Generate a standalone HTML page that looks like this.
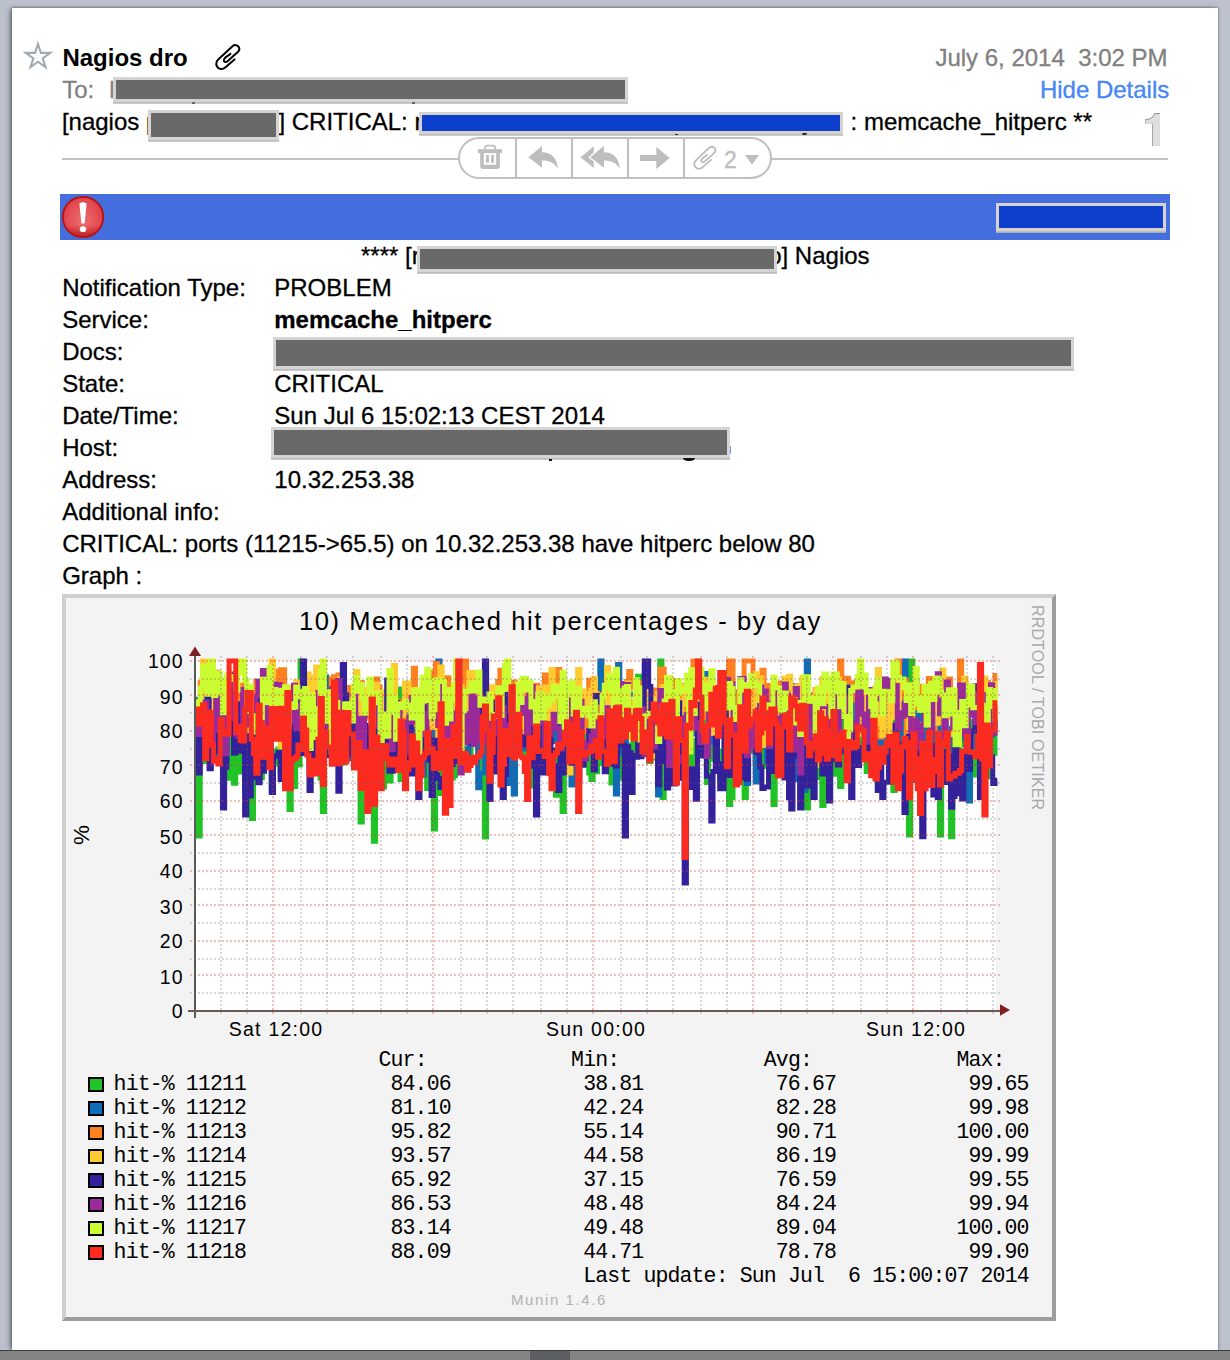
<!DOCTYPE html>
<html>
<head>
<meta charset="utf-8">
<title>Mail</title>
<style>
html,body{margin:0;padding:0;}html{width:1230px;height:1360px;overflow:hidden;}
body{width:1230px;height:1360px;overflow:hidden;position:relative;background:#bcc1cb;font-family:"Liberation Sans",sans-serif;}
#panel{position:absolute;left:12px;top:8px;width:1206px;height:1342px;background:#fff;box-shadow:-3px 0 5px -1px rgba(55,60,70,.55),0 0 2.5px rgba(55,60,70,.75);}
#bottom{position:absolute;left:0;top:1349.8px;width:1230px;height:11px;background:#848484;border-top:1.8px solid #393b3f;box-sizing:border-box;}
#bottom i{position:absolute;left:530px;top:0;width:40px;height:10px;background:#5d5f63;}
.t{position:absolute;white-space:pre;font-size:24px;line-height:32px;height:32px;color:#000;margin:1px 0 0 .6px;-webkit-text-stroke:.3px;}
.g{color:#808080;}
.b{font-weight:bold;}
.rd{position:absolute;box-sizing:border-box;border:3px solid #d4d4d4;background:#696969;box-shadow:0 1.8px 0 #bdbdbd;}
.rb{background:#0c40cc;border-color:#d6d3cf;}
#bar{position:absolute;left:60px;top:194px;width:1110px;height:46px;background:#446ddd;}
#hr{position:absolute;left:62px;top:158px;width:1106px;height:2px;background:#c1c1c1;}
#pill{position:absolute;left:458px;top:137px;width:314px;height:42px;box-sizing:border-box;border:2px solid #bfbfbf;border-radius:21px;background:#fff;}
#pill i{position:absolute;top:0;width:1.8px;height:38px;background:#bfbfbf;}
svg{position:absolute;left:0;top:0;overflow:visible;}
</style>
</head>
<body>
<div id="panel"></div>
<div id="bottom"><i></i></div>
<style>
#graph{position:absolute;left:62px;top:594px;width:994px;height:727px;box-sizing:border-box;background:#f3f3f3;border:4px solid #cfcfcf;border-right-color:#9d9d9d;border-bottom-color:#9d9d9d;}
.gl{position:absolute;white-space:pre;line-height:24px;height:24px;color:#000;}
.m{position:absolute;white-space:pre;font-family:"Liberation Mono",monospace;font-size:21.5px;letter-spacing:-0.86px;line-height:26px;height:26px;color:#000;}
.sw{position:absolute;left:88px;width:16px;height:15px;box-sizing:border-box;border:2px solid #000;}
</style><!-- header -->
<svg width="1230" height="200" viewBox="0 0 1230 200">
  <polygon id="star" fill="none" stroke="#a1a9b5" stroke-width="2.1" stroke-linejoin="miter" stroke-miterlimit="10" points="38.00,44.00 40.89,52.88 50.22,52.88 42.67,58.37 45.55,67.25 38.00,61.76 30.45,67.25 33.33,58.37 25.78,52.88 35.11,52.88"/>
  <path d="M234.5,59.4 L225.5,67.3 C222.5,70 218.5,69.5 217,66.5 C215.5,63.5 217,60.5 219,58.8 L232.5,46.2 C234.5,44.5 237.5,44.8 238.8,47 C240,49 239,51 237.2,52.5 L227.5,61.2 C226,62.5 224.5,62.2 223.9,61 C223.3,59.8 224,58.8 225,57.9 L230.4,53.9" fill="none" stroke="#000" stroke-width="2" stroke-linecap="round" stroke-linejoin="round"/>
</svg>
<div class="t b" style="left:61.8px;top:40.7px;-webkit-text-stroke:0;">Nagios dro</div>
<div class="t g" style="left:934.8px;top:40.7px;">July 6, 2014  3:02 PM</div>
<div class="t g" style="left:61.6px;top:72.6px;">To:</div>
<div class="t g" style="left:108.6px;top:72.6px;">l</div>
<div class="t" style="left:1039.3px;top:72.6px;color:#4386f4;">Hide Details</div>
<div class="rd" style="left:113.2px;top:77.1px;width:514.6px;height:25px;"></div>

<div class="t" style="left:61.3px;top:104.5px;">[nagios </div>
<div class="t" style="left:277.8px;top:104.5px;">] CRITICAL: r</div>
<div class="t" style="left:850px;top:104.5px;">: memcache_hitperc **</div>
<div style="position:absolute;left:146.8px;top:116.8px;width:1.6px;height:18px;background:#b8661a;"></div>
<div class="rd" style="left:148.1px;top:110.2px;width:131px;height:29.9px;"></div>
<div class="rd rb" style="left:419.1px;top:112.1px;width:424.2px;height:22px;"></div>
<svg width="1230" height="200" viewBox="0 0 1230 200"><path id="one" d="M1154.3,113 L1160,113 L1160,146 L1152,146 L1152,123.6 L1145,123.6 L1145,119.3 C1150,119 1153,117 1154.3,113 Z" fill="#979797"/><path d="M1154.9,114 L1160,114 L1160,146 L1152.8,146 L1152.8,123.6 L1145.6,123.6 L1145.6,120.2 C1150.5,119.8 1153.7,117.6 1154.9,114 Z" fill="#dedede"/></svg>

<div style="position:absolute;left:191.5px;top:102.4px;width:3px;height:1.2px;background:#666;"></div>
<div style="position:absolute;left:411.5px;top:102.3px;width:3.5px;height:1.4px;background:#666;"></div>
<div style="position:absolute;left:674.6px;top:134px;width:3.2px;height:1.2px;background:#222;"></div>
<div style="position:absolute;left:801.5px;top:133.4px;width:5.5px;height:1.4px;background:#222;border-radius:0 0 3px 3px;"></div>
<div id="hr"></div>
<div id="pill"><i style="left:55.3px"></i><i style="left:111.3px"></i><i style="left:167.3px"></i><i style="left:223.3px"></i></div>
<svg width="1230" height="200" viewBox="0 0 1230 200" fill="#bdbdbd">
  <!-- trash -->
  <path d="M484.9,149.5 L484.9,148.2 A2.6,2.6 0 0 1 487.5,145.6 L492.7,145.6 A2.6,2.6 0 0 1 495.3,148.2 L495.3,149.5" fill="none" stroke="#bdbdbd" stroke-width="1.8"/>
  <rect x="478" y="149.2" width="24" height="3.9"/>
  <path d="M480.2,153 L499.9,153 L499.9,166.6 A2.4,2.4 0 0 1 497.5,169 L482.6,169 A2.4,2.4 0 0 1 480.2,166.6 Z M483.8,153 L483.8,164.8 L496.2,164.8 L496.2,153 Z" fill-rule="evenodd"/>
  <rect x="486.1" y="155" width="2.8" height="7.8"/>
  <rect x="491.1" y="155" width="2.8" height="7.8"/>
  <!-- reply -->
  <path d="M528.4,157.3 L542,146.1 L542,152.3 C551,152.3 557.5,158 557.6,168.5 C555,163 549,160.4 542,160.4 L542,167.7 Z"/>
  <!-- reply all -->
  <path d="M580.6,157.3 L593.8,146.3 L593.8,168 Z"/>
  <path d="M590.3,157.3 L603.9,146.1 L603.9,152.3 C612.9,152.3 619.4,158 619.5,168.5 C616.9,163 610.9,160.4 603.9,160.4 L603.9,167.7 Z" stroke="#fff" stroke-width="2.6" paint-order="stroke"/>
  <!-- forward -->
  <path d="M640,154.9 L656.3,154.9 L656.3,147 L669.7,158 L656.3,169 L656.3,161 L640,161 Z"/>
  <!-- clip -->
  <g transform="translate(694.3,146.2) scale(0.92) translate(-216.3,-44.5)">
  <path d="M234.5,59.4 L225.5,67.3 C222.5,70 218.5,69.5 217,66.5 C215.5,63.5 217,60.5 219,58.8 L232.5,46.2 C234.5,44.5 237.5,44.8 238.8,47 C240,49 239,51 237.2,52.5 L227.5,61.2 C226,62.5 224.5,62.2 223.9,61 C223.3,59.8 224,58.8 225,57.9 L230.4,53.9" fill="none" stroke="#bdbdbd" stroke-width="2" stroke-linecap="round" stroke-linejoin="round"/>
  </g>
  <path d="M745,155 L759,155 L752,164.5 Z"/>
</svg>
<div class="t" style="left:723.5px;top:143.3px;color:#bdbdbd;font-size:23px;">2</div>

<!-- blue bar -->
<div id="bar"></div>
<svg width="1230" height="260" viewBox="0 0 1230 260">
  <defs>
    <radialGradient id="rg" cx="0.5" cy="0.55" r="0.55">
      <stop offset="0" stop-color="#ec7274"/>
      <stop offset="0.6" stop-color="#e85258"/>
      <stop offset="0.86" stop-color="#e04048"/>
      <stop offset="1" stop-color="#b61a1c"/>
    </radialGradient>
    <linearGradient id="lg" x1="0" y1="0" x2="0" y2="1">
      <stop offset="0" stop-color="#ff8080" stop-opacity=".18"/>
      <stop offset="0.7" stop-color="#a00000" stop-opacity="0"/>
      <stop offset="1" stop-color="#900000" stop-opacity=".55"/>
    </linearGradient>
  </defs>
  <circle cx="83" cy="217" r="21" fill="url(#rg)"/>
  <circle cx="83" cy="217" r="20.2" fill="url(#lg)"/>
  <circle cx="83" cy="217" r="20.2" fill="none" stroke="#b41416" stroke-width="1.8"/>
  <path d="M79.4,203.5 Q83,201 86.6,203.5 L84.6,223.6 L81.4,223.6 Z" fill="#fff"/>
  <ellipse cx="83" cy="229.2" rx="3.2" ry="2.9" fill="#fff"/>
</svg>
<div class="rd rb" style="left:996px;top:203px;width:170px;height:28px;"></div>

<!-- body -->
<div class="t" style="left:360.4px;top:238.8px;">**** [r</div>
<div class="t" style="left:767.6px;top:238.8px;">o] Nagios</div>
<div class="rd" style="left:417.2px;top:246.2px;width:359.5px;height:25.9px;"></div>

<div class="t" style="left:61.6px;top:271.3px;">Notification Type:</div>
<div class="t" style="left:273.7px;top:271.3px;">PROBLEM</div>
<div class="t" style="left:61.6px;top:303.3px;">Service:</div>
<div class="t b" style="left:273.7px;top:303.3px;">memcache_hitperc</div>
<div class="t" style="left:61.6px;top:335.3px;">Docs:</div>
<div class="rd" style="left:273.3px;top:337.2px;width:800.7px;height:31.7px;"></div>
<div class="t" style="left:61.6px;top:367.3px;">State:</div>
<div class="t" style="left:273.7px;top:367.3px;">CRITICAL</div>
<div class="t" style="left:61.6px;top:399.3px;">Date/Time:</div>
<div class="t" style="left:273.7px;top:399.3px;">Sun Jul 6 15:02:13 CEST 2014</div>
<div class="t" style="left:61.6px;top:431.3px;">Host:</div>
<div style="position:absolute;left:729px;top:445.5px;width:2px;height:8px;background:#5a9bea;border-radius:1px;"></div>
<div class="rd" style="left:271.2px;top:427.4px;width:458.8px;height:30.9px;"></div>
<div style="position:absolute;left:548.6px;top:458.6px;width:3.8px;height:2.6px;background:#111;"></div>
<div style="position:absolute;left:683.4px;top:457.8px;width:12px;height:3.6px;background:#111;border-radius:0 0 6px 6px/0 0 3.6px 3.6px;"></div>
<div class="t" style="left:61.6px;top:463.3px;">Address:</div>
<div class="t" style="left:273.7px;top:463.3px;">10.32.253.38</div>
<div class="t" style="left:61.6px;top:495.3px;">Additional info:</div>
<div class="t" style="left:61.6px;top:527.3px;">CRITICAL: ports (11215-&gt;65.5) on 10.32.253.38 have hitperc below 80</div>
<div class="t" style="left:61.6px;top:559.3px;">Graph :</div>
<div id="graph"></div>
<svg width="1230" height="1360" viewBox="0 0 1230 1360">
<rect x="196" y="661" width="800" height="350" fill="#fff"/>
<g fill="none" stroke-width="5" stroke-linejoin="miter" stroke-linecap="butt" style="filter:blur(.55px)"><path d="M198,773V836h2.22V753.3h2.22V761.4h2.22V741.4h2.22V711.2h2.22V723.6h2.22V726.5h2.22V748.1h2.22V725h2.22V737.8h2.22V692.4h2.22V736.9h2.22V742.6h2.22V778.2h2.22V710.3h2.22V752h2.22V783.3h2.22V725.6h2.22V772h2.22V698h2.22V716.5h2.22V746.1h2.22V784.7h2.22V787.1h2.22V818.5h2.22V754.8h2.22V738.5h2.22V734h2.22V777.8h2.22V726.6h2.22V743.9h2.22V706h2.22V750.8h2.22V789.7h2.22V751.2h2.22V764h2.22V749.1h2.22V771.3h2.22V738.3h2.22V698.7h2.22V731.6h2.22V809.4h2.22V746.4h2.22V786.5h2.22V729.1h2.22V764.9h2.22V661h2.22V702.9h2.22V725.2h2.22V721.4h2.22V758.5h2.22V742.9h2.22V750.2h2.22V753.4h2.22V729.9h2.22V778h2.22V811.5h2.22V736.8h2.22V691.3h2.22V753.1h2.22V710.1h2.22V724.7h2.22V740.8h2.22V752.4h2.22V751.4h2.22V762.9h2.22V743.4h2.22V718.3h2.22V712.8h2.22V733.1h2.22V757.1h2.22V750.7h2.22V754.7h2.22V822h2.22V738.9h2.22V775.3h2.22V759.5h2.22V726.7h2.22V772.9h2.22V841.2h2.22V748.4h2.22V762.3h2.22V741.1h2.22V786.9h2.22V709h2.22V691.4h2.22V780.9h2.22V718.9h2.22V765h2.22V729.2h2.22V689h2.22V779.4h2.22V727.3h2.22V708.4h2.22V768.6h2.22V762h2.22V743.8h2.22V713.1h2.22V712.9h2.22V724.8h2.22V753.6h2.22V730h2.22V738h2.22V788.4h2.22V748h2.22V707.6h2.22V829h2.22V760.4h2.22V793.4h2.22V685.7h2.22V789.8h2.22V722.6h2.22V713.6h2.22V737.1h2.22V778h2.22V775.5h2.22V732.6h2.22V717.4h2.22V770.3h2.22V749.5h2.22V727.4h2.22V756h2.22V756.5h2.22V740.3h2.22V736.2h2.22V691h2.22V747.1h2.22V747.2h2.22V767.8h2.22V837h2.22V742.8h2.22V720.1h2.22V744.7h2.22V754.6h2.22V729.7h2.22V706.7h2.22V754.8h2.22V733h2.22V703.6h2.22V740.9h2.22V703.2h2.22V756.4h2.22V745.7h2.22V747.3h2.22V739.7h2.22V712.5h2.22V753.3h2.22V766.7h2.22V704.5h2.22V717.3h2.22V786.1h2.22V730.3h2.22V698.1h2.22V739.6h2.22V754.2h2.22V722.5h2.22V726.6h2.22V759.8h2.22V755.9h2.22V752.3h2.22V756.4h2.22V795.2h2.22V786.2h2.22V747.1h2.22V811.5h2.22V769.4h2.22V726.9h2.22V742.3h2.22V752.1h2.22V711h2.22V689.4h2.22V741.2h2.22V731.7h2.22V745.9h2.22V713.8h2.22V745.2h2.22V773.1h2.22V779.4h2.22V758h2.22V771.8h2.22V763.4h2.22V757h2.22V760.8h2.22V732.4h2.22V764.5h2.22V770.8h2.22V783h2.22V706.7h2.22V748.1h2.22V734.6h2.22V731.9h2.22V777.9h2.22V744h2.22V744.9h2.22V777.3h2.22V757.8h2.22V729h2.22V718.5h2.22V676.3h2.22V687h2.22V743.6h2.22V739.3h2.22V746.6h2.22V761.4h2.22V722.9h2.22V711.6h2.22V758.1h2.22V761.4h2.22V661h2.22V797.5h2.22V737.9h2.22V690.3h2.22V741.9h2.22V771.6h2.22V741.9h2.22V725.4h2.22V749.3h2.22V765.5h2.22V743.3h2.22V745.9h2.22V736.8h2.22V718.1h2.22V763.9h2.22V748.8h2.22V740.4h2.22V726.9h2.22V743h2.22V718.1h2.22V737.4h2.22V782.4h2.22V701.7h2.22V759.3h2.22V711.9h2.22V702.5h2.22V762.5h2.22V780.2h2.22V750.9h2.22V757h2.22V727h2.22V804.5h2.22V797.5h2.22V760.1h2.22V778.6h2.22V741.8h2.22V759.6h2.22V714.4h2.22V797.5h2.22V761.9h2.22V732.2h2.22V751.6h2.22V683.7h2.22V762.5h2.22V718.2h2.22V728.5h2.22V756.7h2.22V766.5h2.22V744.2h2.22V759.8h2.22V688.3h2.22V804.5h2.22V741.4h2.22V750.2h2.22V719.9h2.22V709.5h2.22V738.7h2.22V747.6h2.22V757.2h2.22V735.8h2.22V706.3h2.22V771.3h2.22V709.6h2.22V714.6h2.22V752.4h2.22V757.8h2.22V808h2.22V736.9h2.22V757.1h2.22V718.8h2.22V777.6h2.22V720h2.22V774h2.22V805.6h2.22V696.1h2.22V788.9h2.22V763.1h2.22V726.7h2.22V774.3h2.22V732.7h2.22V763.7h2.22V786.5h2.22V693.9h2.22V747.8h2.22V768.5h2.22V750h2.22V760.4h2.22V761.3h2.22V702.1h2.22V753.8h2.22V725.7h2.22V733.9h2.22V736.3h2.22V771.4h2.22V767.4h2.22V749.6h2.22V713.4h2.22V778h2.22V788.7h2.22V731.4h2.22V728.3h2.22V746.1h2.22V739.6h2.22V762.5h2.22V724.6h2.22V790.6h2.22V709.7h2.22V758.3h2.22V678.4h2.22V727.4h2.22V713.7h2.22V723.4h2.22V835h2.22V661h2.22V721.8h2.22V703.4h2.22V744.5h2.22V754.1h2.22V703.9h2.22V732.5h2.22V692.4h2.22V724.2h2.22V750.9h2.22V718.8h2.22V724.6h2.22V731.4h2.22V835h2.22V770.3h2.22V727.7h2.22V771.3h2.22V748.7h2.22V836.7h2.22V747.2h2.22V713h2.22V753.1h2.22V744.8h2.22V743.4h2.22V719.8h2.22V717.6h2.22V776.5h2.22V724.9h2.22V721.5h2.22V775h2.22V698.7h2.22V705.9h2.22V745.1h2.22V755.9h2.22V776.7h2.22V734.8h2.22V715.2h2.22V753.3h2.22V716.8h2.22" stroke="#21c427"/>
<path d="M198,696.7V699.5h2.22V727.6h2.22V738h2.22V718.9h2.22V704.2h2.22V738.4h2.22V751h2.22V749.1h2.22V730.2h2.22V754.5h2.22V754.5h2.22V740.5h2.22V759.5h2.22V715.3h2.22V722h2.22V722.6h2.22V722.6h2.22V748.6h2.22V740.1h2.22V748.3h2.22V739.2h2.22V790.5h2.22V725.2h2.22V706.4h2.22V739.3h2.22V734.5h2.22V726.7h2.22V746h2.22V713.5h2.22V713.5h2.22V735.8h2.22V692.2h2.22V764.4h2.22V695.9h2.22V708.4h2.22V718.7h2.22V689.9h2.22V691h2.22V676.5h2.22V735.3h2.22V755.5h2.22V768.3h2.22V735.8h2.22V699.5h2.22V753.6h2.22V726.1h2.22V753.5h2.22V702.3h2.22V741.8h2.22V694.6h2.22V699.7h2.22V702.2h2.22V719.8h2.22V698.9h2.22V744.8h2.22V712.2h2.22V780h2.22V677.1h2.22V719.5h2.22V747.9h2.22V687.1h2.22V736.1h2.22V685.7h2.22V716.5h2.22V717.3h2.22V685.1h2.22V725.2h2.22V718.7h2.22V730.5h2.22V759.1h2.22V702.1h2.22V702.1h2.22V717.5h2.22V698.1h2.22V722.5h2.22V744.2h2.22V741.3h2.22V761.2h2.22V736.4h2.22V736.4h2.22V711.4h2.22V715.5h2.22V715.5h2.22V733.6h2.22V731.8h2.22V736.1h2.22V736.1h2.22V733.8h2.22V700.3h2.22V760h2.22V711.8h2.22V711.8h2.22V734.3h2.22V743.8h2.22V727h2.22V727.4h2.22V717.5h2.22V741.9h2.22V701.2h2.22V727.1h2.22V702.9h2.22V774.8h2.22V700h2.22V724h2.22V741.4h2.22V721h2.22V740.3h2.22V729h2.22V661h2.22V684.9h2.22V705.5h2.22V741.9h2.22V741.9h2.22V723.8h2.22V685.9h2.22V704.4h2.22V679.8h2.22V686.6h2.22V735.7h2.22V735.7h2.22V769.8h2.22V769.8h2.22V714.3h2.22V677.6h2.22V704.9h2.22V718.4h2.22V787.7h2.22V772.7h2.22V772.7h2.22V707h2.22V724.5h2.22V739.2h2.22V741.3h2.22V737.6h2.22V746.1h2.22V731.6h2.22V714.9h2.22V743.5h2.22V711.3h2.22V783.5h2.22V753h2.22V741.7h2.22V794h2.22V710.1h2.22V742.1h2.22V704.6h2.22V690.5h2.22V748.9h2.22V732.8h2.22V736.9h2.22V702.1h2.22V702.9h2.22V702.9h2.22V759.5h2.22V716.1h2.22V728h2.22V701.5h2.22V753.4h2.22V731.5h2.22V702.4h2.22V680.8h2.22V741.4h2.22V739.5h2.22V712.2h2.22V718.9h2.22V718.9h2.22V727.1h2.22V727.1h2.22V784.9h2.22V683.3h2.22V694.7h2.22V738h2.22V723.1h2.22V694.1h2.22V693.5h2.22V711.3h2.22V726.8h2.22V682.1h2.22V736.9h2.22V721.7h2.22V735.4h2.22V661h2.22V737.4h2.22V702.2h2.22V692.1h2.22V704.7h2.22V751.3h2.22V733.3h2.22V794h2.22V664.5h2.22V725.4h2.22V752.9h2.22V746.6h2.22V722.7h2.22V694.1h2.22V694.2h2.22V694.2h2.22V732h2.22V733.3h2.22V688.2h2.22V685.4h2.22V728.8h2.22V734.3h2.22V739.8h2.22V722.9h2.22V722.9h2.22V708.4h2.22V795h2.22V699.2h2.22V745.6h2.22V703h2.22V686h2.22V712.1h2.22V748.6h2.22V748.6h2.22V741.4h2.22V726.7h2.22V733.1h2.22V707.7h2.22V689.7h2.22V699.4h2.22V712.3h2.22V712.3h2.22V734h2.22V732.8h2.22V719.5h2.22V682.8h2.22V683.7h2.22V673.4h2.22V706.1h2.22V702.3h2.22V742.4h2.22V734.8h2.22V755.6h2.22V736.3h2.22V722.3h2.22V725.8h2.22V753.9h2.22V757.3h2.22V757.3h2.22V706.9h2.22V747.5h2.22V702.6h2.22V722.9h2.22V735.3h2.22V729.7h2.22V704.2h2.22V783.5h2.22V709.2h2.22V709.2h2.22V691.7h2.22V781.9h2.22V686.3h2.22V734.1h2.22V691.9h2.22V723.1h2.22V762.2h2.22V747.2h2.22V753.8h2.22V747.5h2.22V731.9h2.22V731.9h2.22V759.2h2.22V697.5h2.22V720.2h2.22V688.9h2.22V683.7h2.22V687.1h2.22V685.8h2.22V686.1h2.22V779.8h2.22V729.2h2.22V790.5h2.22V790.5h2.22V661h2.22V727.3h2.22V695.1h2.22V708.5h2.22V720.9h2.22V750h2.22V727.4h2.22V703.5h2.22V698.8h2.22V754.5h2.22V745.5h2.22V715h2.22V717.1h2.22V714.2h2.22V736h2.22V717h2.22V692.1h2.22V691.1h2.22V691.1h2.22V739.1h2.22V739.1h2.22V730.7h2.22V690.4h2.22V726.2h2.22V688.5h2.22V695.2h2.22V727.8h2.22V727.8h2.22V719.8h2.22V719.8h2.22V716.6h2.22V716.6h2.22V778.6h2.22V729.2h2.22V718.6h2.22V756.7h2.22V760.8h2.22V740.4h2.22V765.4h2.22V765.4h2.22V730h2.22V740.2h2.22V714.8h2.22V741.4h2.22V661h2.22V705.8h2.22V759h2.22V738.1h2.22V752.6h2.22V681.8h2.22V760.8h2.22V723.1h2.22V711.8h2.22V777.2h2.22V691.4h2.22V702.7h2.22V702.7h2.22V752.8h2.22V739.4h2.22V705.9h2.22V748.3h2.22V718.6h2.22V718.6h2.22V737h2.22V728.3h2.22V749.9h2.22V726.8h2.22V719.5h2.22V721.6h2.22V711.4h2.22V694.4h2.22V738.8h2.22V725.4h2.22V801h2.22V741.4h2.22V747h2.22V723.6h2.22V731.4h2.22V756.2h2.22V756.2h2.22V712.1h2.22V719.5h2.22V700.4h2.22V734.9h2.22V721.6h2.22V727.2h2.22" stroke="#0e6db6"/>
<path d="M198,699.5V703h2.22V682.5h2.22V680.8h2.22V692.1h2.22V692.1h2.22V708.9h2.22V676.2h2.22V704.2h2.22V672.2h2.22V696.8h2.22V688.3h2.22V683.6h2.22V700h2.22V685h2.22V685h2.22V673.4h2.22V711h2.22V688.6h2.22V705.5h2.22V685h2.22V687.3h2.22V687.3h2.22V727.2h2.22V727.2h2.22V703.3h2.22V694.8h2.22V681.2h2.22V690.8h2.22V690.4h2.22V688.6h2.22V714.5h2.22V702.4h2.22V701.9h2.22V720.4h2.22V671.5h2.22V674.9h2.22V730.2h2.22V669.7h2.22V669.7h2.22V703.5h2.22V717.1h2.22V717.1h2.22V708.4h2.22V702.4h2.22V702.4h2.22V685.4h2.22V702.5h2.22V702.3h2.22V687.3h2.22V700.6h2.22V697.8h2.22V721.7h2.22V692h2.22V712.5h2.22V690.4h2.22V699.9h2.22V728.4h2.22V725.1h2.22V725.1h2.22V708.9h2.22V678.8h2.22V676.7h2.22V698.8h2.22V674.9h2.22V713.6h2.22V717.5h2.22V689.1h2.22V687.5h2.22V696.1h2.22V702.3h2.22V705.5h2.22V723.6h2.22V684.5h2.22V682.4h2.22V702.1h2.22V702.1h2.22V718.3h2.22V695.1h2.22V725.8h2.22V718h2.22V679.1h2.22V686.9h2.22V701.9h2.22V712.3h2.22V699.2h2.22V700.2h2.22V701.7h2.22V718.8h2.22V699.5h2.22V702.2h2.22V701.2h2.22V701.2h2.22V707.2h2.22V734h2.22V686.7h2.22V690.5h2.22V713.1h2.22V668.3h2.22V724.6h2.22V717.8h2.22V705.9h2.22V686h2.22V686h2.22V730.2h2.22V680.9h2.22V672.2h2.22V684.6h2.22V663.6h2.22V691.8h2.22V697.2h2.22V717.9h2.22V691.4h2.22V677.8h2.22V688.7h2.22V691.5h2.22V706.7h2.22V680.2h2.22V689.5h2.22V699h2.22V724h2.22V661h2.22V715.8h2.22V698.6h2.22V673.7h2.22V722.1h2.22V711.6h2.22V689.3h2.22V685h2.22V675h2.22V675h2.22V692.4h2.22V688.1h2.22V694.1h2.22V693.9h2.22V706h2.22V681.4h2.22V670.2h2.22V689.9h2.22V699.5h2.22V707.3h2.22V707.3h2.22V712h2.22V682.1h2.22V700.1h2.22V700.1h2.22V727.9h2.22V690.6h2.22V690.6h2.22V698.4h2.22V687.7h2.22V722.1h2.22V706.3h2.22V685.2h2.22V710.1h2.22V710.1h2.22V701.7h2.22V675h2.22V690.9h2.22V684.4h2.22V686.2h2.22V687.2h2.22V687.2h2.22V669.6h2.22V700.1h2.22V723.4h2.22V694.4h2.22V708.4h2.22V717.7h2.22V687.5h2.22V711.9h2.22V739.3h2.22V694.3h2.22V699.2h2.22V704h2.22V731.8h2.22V691.4h2.22V680.3h2.22V719.3h2.22V693.3h2.22V693.3h2.22V705.6h2.22V712.8h2.22V712.8h2.22V692.3h2.22V724h2.22V681.6h2.22V703.4h2.22V686.8h2.22V706.5h2.22V713.6h2.22V713.6h2.22V702.9h2.22V686.7h2.22V681.5h2.22V671.5h2.22V687.4h2.22V687.4h2.22V680.9h2.22V702h2.22V698.3h2.22V683h2.22V749.6h2.22V738.9h2.22V738.9h2.22V690.7h2.22V697.7h2.22V690h2.22V721.2h2.22V668.9h2.22V668.9h2.22V693.6h2.22V702.3h2.22V684.5h2.22V680.5h2.22V702.4h2.22V691h2.22V690.6h2.22V685.3h2.22V696.8h2.22V688.5h2.22V717.2h2.22V690h2.22V690h2.22V661h2.22V691.3h2.22V682.7h2.22V682.7h2.22V685.9h2.22V685.9h2.22V717.2h2.22V717.2h2.22V682.3h2.22V732.9h2.22V724.7h2.22V689.8h2.22V689.8h2.22V690.4h2.22V691.3h2.22V689.1h2.22V661h2.22V661h2.22V709.4h2.22V691.7h2.22V700.6h2.22V683.1h2.22V712.9h2.22V661h2.22V661h2.22V661h2.22V661h2.22V699.4h2.22V689.1h2.22V689.1h2.22V692.1h2.22V670.2h2.22V693.5h2.22V726.3h2.22V685.4h2.22V710.3h2.22V711.1h2.22V709.8h2.22V683.1h2.22V683.5h2.22V711.2h2.22V709.4h2.22V687.4h2.22V691.8h2.22V709.3h2.22V733.4h2.22V736.2h2.22V692.3h2.22V695.5h2.22V699.9h2.22V736.2h2.22V684.5h2.22V696.2h2.22V696.2h2.22V697.7h2.22V689.7h2.22V689.7h2.22V690.3h2.22V706.9h2.22V677.2h2.22V682.4h2.22V700h2.22V687.1h2.22V707.2h2.22V693h2.22V676.5h2.22V661h2.22V687.8h2.22V699.8h2.22V678.2h2.22V682.9h2.22V700.1h2.22V700.1h2.22V682.3h2.22V705.9h2.22V690.7h2.22V730.7h2.22V730.7h2.22V693.2h2.22V691.7h2.22V719.4h2.22V700.2h2.22V705.4h2.22V716.7h2.22V737h2.22V711.9h2.22V717.3h2.22V687.1h2.22V687.1h2.22V692.3h2.22V692.3h2.22V690.5h2.22V661h2.22V697.4h2.22V697.4h2.22V679.9h2.22V733.4h2.22V688.3h2.22V746.8h2.22V695.5h2.22V707.8h2.22V692.1h2.22V686.2h2.22V695.3h2.22V703.5h2.22V695.5h2.22V678.5h2.22V728.8h2.22V728.8h2.22V698.6h2.22V720.5h2.22V701.7h2.22V714.3h2.22V720.4h2.22V691.1h2.22V678.9h2.22V690.7h2.22V694.3h2.22V694.3h2.22V716h2.22V661h2.22V708.7h2.22V684.1h2.22V705.9h2.22V705.8h2.22V692.3h2.22V690.3h2.22V710.3h2.22V710.3h2.22V697.2h2.22V731.1h2.22V682.5h2.22V682.5h2.22V710h2.22V685.2h2.22V690.3h2.22V675.6h2.22" stroke="#ff8122"/>
<path d="M198,703V706.5h2.22V714.8h2.22V661h2.22V697.7h2.22V697.7h2.22V725.6h2.22V739.6h2.22V689.4h2.22V676h2.22V714.6h2.22V718.5h2.22V715.5h2.22V724h2.22V678.4h2.22V721.3h2.22V728.2h2.22V687.2h2.22V739.5h2.22V717.4h2.22V725h2.22V700.1h2.22V727.8h2.22V720.7h2.22V745.5h2.22V696h2.22V701.7h2.22V705.9h2.22V713.6h2.22V710.4h2.22V691.3h2.22V702.8h2.22V691.3h2.22V711h2.22V661h2.22V725.5h2.22V684.3h2.22V727.4h2.22V746.8h2.22V740.9h2.22V713.4h2.22V687.2h2.22V695.8h2.22V695.8h2.22V689.4h2.22V681.8h2.22V681.8h2.22V713.3h2.22V726.3h2.22V691.3h2.22V674h2.22V677.3h2.22V723.1h2.22V717.6h2.22V667h2.22V668.3h2.22V713.5h2.22V698.9h2.22V714.3h2.22V753.7h2.22V716.7h2.22V702.9h2.22V735.6h2.22V701.1h2.22V741.5h2.22V678.5h2.22V678.5h2.22V726.2h2.22V700.2h2.22V727.5h2.22V746.3h2.22V743.5h2.22V671.5h2.22V718.3h2.22V709.6h2.22V700.4h2.22V693.7h2.22V689.6h2.22V687.4h2.22V773h2.22V713.5h2.22V684.3h2.22V721.9h2.22V719.1h2.22V691.8h2.22V726.4h2.22V713.6h2.22V691.9h2.22V695h2.22V665.5h2.22V724.3h2.22V727.3h2.22V718.2h2.22V714.4h2.22V682.9h2.22V682.9h2.22V713.2h2.22V715.4h2.22V696.5h2.22V702.9h2.22V722.1h2.22V722.1h2.22V722.9h2.22V703.1h2.22V684h2.22V723.5h2.22V723.5h2.22V727.6h2.22V679.5h2.22V739.2h2.22V667.1h2.22V705.4h2.22V727.3h2.22V734.6h2.22V744.1h2.22V711.9h2.22V700h2.22V700h2.22V691.2h2.22V686.8h2.22V743.7h2.22V731.6h2.22V705.2h2.22V672.6h2.22V672.6h2.22V699h2.22V714h2.22V714h2.22V712.9h2.22V726h2.22V726h2.22V694.6h2.22V715.1h2.22V686.8h2.22V713.1h2.22V739.7h2.22V747.1h2.22V716.1h2.22V717.4h2.22V731.5h2.22V714.5h2.22V701.4h2.22V725h2.22V733.9h2.22V745.3h2.22V745.3h2.22V736.3h2.22V701.8h2.22V701.8h2.22V706.6h2.22V729.2h2.22V690.7h2.22V704.3h2.22V741.6h2.22V688.1h2.22V741.6h2.22V724.6h2.22V687.1h2.22V731.7h2.22V695.7h2.22V669.6h2.22V710.1h2.22V685.8h2.22V685.8h2.22V738.7h2.22V711.8h2.22V706.8h2.22V727.5h2.22V773h2.22V714.7h2.22V714.7h2.22V689.2h2.22V669.6h2.22V695.1h2.22V691h2.22V693.4h2.22V714.6h2.22V716h2.22V690.1h2.22V678.2h2.22V698.2h2.22V694.9h2.22V694.9h2.22V739.2h2.22V749.7h2.22V667.5h2.22V702.8h2.22V715.2h2.22V704h2.22V720.3h2.22V690.9h2.22V732.2h2.22V732.2h2.22V686h2.22V683.1h2.22V711h2.22V711h2.22V701.3h2.22V691.7h2.22V691.6h2.22V691.6h2.22V689.2h2.22V682.3h2.22V693.8h2.22V708.4h2.22V697.6h2.22V724.3h2.22V756.3h2.22V693.4h2.22V706.6h2.22V686.4h2.22V707.2h2.22V726.9h2.22V680h2.22V701.3h2.22V755.1h2.22V755.1h2.22V701.3h2.22V714.7h2.22V704.4h2.22V686.2h2.22V694.7h2.22V744.9h2.22V689.5h2.22V694.4h2.22V715.4h2.22V661h2.22V714.9h2.22V679.8h2.22V679.3h2.22V698.5h2.22V727.9h2.22V733.5h2.22V733.5h2.22V686.8h2.22V718.8h2.22V718.8h2.22V688.5h2.22V704.3h2.22V717.9h2.22V687.8h2.22V714.3h2.22V714.3h2.22V753.2h2.22V714.9h2.22V717.7h2.22V685.4h2.22V703.3h2.22V714.3h2.22V699.1h2.22V730h2.22V719h2.22V673.7h2.22V699.9h2.22V677.8h2.22V691.3h2.22V745.3h2.22V715h2.22V709.8h2.22V743.7h2.22V756.9h2.22V745.9h2.22V745.9h2.22V708.6h2.22V692.6h2.22V677.9h2.22V687.7h2.22V676.3h2.22V687h2.22V754.1h2.22V714.8h2.22V685.7h2.22V706.6h2.22V677.2h2.22V707.1h2.22V693h2.22V707.8h2.22V697.1h2.22V732.2h2.22V691h2.22V699.1h2.22V765.3h2.22V678.4h2.22V719.4h2.22V700.8h2.22V689.5h2.22V689.5h2.22V704.8h2.22V704.8h2.22V679.1h2.22V690.5h2.22V691h2.22V702.8h2.22V692.4h2.22V722.8h2.22V738.8h2.22V724.3h2.22V734.4h2.22V689.7h2.22V734.5h2.22V730.2h2.22V695h2.22V744.3h2.22V690.3h2.22V690.3h2.22V734.2h2.22V708.4h2.22V669.6h2.22V723.7h2.22V735.3h2.22V683.5h2.22V726.6h2.22V753.3h2.22V691.5h2.22V717.3h2.22V681.1h2.22V684.5h2.22V714.4h2.22V714.4h2.22V706.7h2.22V715h2.22V727.4h2.22V733.4h2.22V733.4h2.22V748.9h2.22V729.3h2.22V729.3h2.22V725.1h2.22V725.1h2.22V720.2h2.22V697.9h2.22V697.9h2.22V685.8h2.22V723.2h2.22V685.3h2.22V723.1h2.22V670.1h2.22V744.3h2.22V713.1h2.22V712h2.22V717.5h2.22V734.5h2.22V712.9h2.22V733.1h2.22V733.1h2.22V688.1h2.22V678.1h2.22V714.5h2.22V714.5h2.22V708.3h2.22V708.3h2.22V697.3h2.22V710h2.22V710h2.22V740h2.22V678.1h2.22V702h2.22V706.6h2.22V690.5h2.22V714.8h2.22V683.5h2.22" stroke="#ffcc2f"/>
<path d="M198,734.5V773h2.22V712h2.22V752.8h2.22V734.2h2.22V696.6h2.22V768.7h2.22V755.1h2.22V751.2h2.22V725.8h2.22V728.7h2.22V746.2h2.22V808h2.22V767.2h2.22V717.1h2.22V675h2.22V727.5h2.22V753.3h2.22V734.2h2.22V703.7h2.22V751.2h2.22V716.5h2.22V815h2.22V735.7h2.22V796h2.22V777.4h2.22V715.8h2.22V716.1h2.22V782.7h2.22V699.9h2.22V771.2h2.22V728.2h2.22V712.4h2.22V752.6h2.22V792.6h2.22V756.1h2.22V756.2h2.22V752.5h2.22V779.6h2.22V779.6h2.22V784.6h2.22V718.4h2.22V705h2.22V705h2.22V758h2.22V749.1h2.22V698.1h2.22V753.6h2.22V661h2.22V713.1h2.22V719.7h2.22V790.5h2.22V739.9h2.22V730.3h2.22V757.3h2.22V762.4h2.22V727.8h2.22V722.5h2.22V755.8h2.22V734.6h2.22V742.6h2.22V743.6h2.22V738.2h2.22V738.2h2.22V791.3h2.22V728.1h2.22V664.5h2.22V694.9h2.22V733.6h2.22V754.7h2.22V713.5h2.22V701.5h2.22V761.8h2.22V724.3h2.22V750.7h2.22V750.7h2.22V764.1h2.22V725.2h2.22V791.7h2.22V725.1h2.22V753.6h2.22V765.1h2.22V731.5h2.22V752.6h2.22V752.6h2.22V735.5h2.22V679.9h2.22V771.3h2.22V771.3h2.22V751.6h2.22V702.4h2.22V756.1h2.22V765.4h2.22V765.5h2.22V758.9h2.22V758.9h2.22V726h2.22V774h2.22V762.6h2.22V762.6h2.22V797.5h2.22V765.6h2.22V706.8h2.22V722.5h2.22V734.8h2.22V760.2h2.22V795.4h2.22V740.3h2.22V775.1h2.22V778.5h2.22V787.4h2.22V778.8h2.22V737.9h2.22V738h2.22V732.2h2.22V764.5h2.22V722.4h2.22V718h2.22V761.5h2.22V761.5h2.22V731.5h2.22V731.5h2.22V738.8h2.22V742.7h2.22V723.9h2.22V723.9h2.22V718.6h2.22V718.7h2.22V717.8h2.22V709.8h2.22V661h2.22V726.9h2.22V799.6h2.22V739.2h2.22V771.9h2.22V701.9h2.22V746.2h2.22V746.3h2.22V797.5h2.22V774.5h2.22V686.2h2.22V713.3h2.22V713.3h2.22V722.1h2.22V721.3h2.22V731.6h2.22V741.2h2.22V736.8h2.22V745h2.22V738.6h2.22V721.4h2.22V724.4h2.22V766.3h2.22V815h2.22V717.6h2.22V730.9h2.22V773h2.22V742.8h2.22V738.9h2.22V733.9h2.22V749.9h2.22V765.7h2.22V776h2.22V790.5h2.22V701.4h2.22V773h2.22V724.2h2.22V737h2.22V743.3h2.22V763.3h2.22V736.5h2.22V717.7h2.22V780.3h2.22V762.6h2.22V765.2h2.22V755.9h2.22V745.2h2.22V730.7h2.22V730h2.22V770.1h2.22V695.6h2.22V702h2.22V702h2.22V736.8h2.22V771.8h2.22V715.3h2.22V764.2h2.22V764.3h2.22V737.9h2.22V766.1h2.22V725.7h2.22V735.6h2.22V745.1h2.22V836h2.22V746.7h2.22V752.5h2.22V792.5h2.22V755.5h2.22V757.3h2.22V724.6h2.22V756.8h2.22V743h2.22V661h2.22V661h2.22V686.6h2.22V750.8h2.22V722.8h2.22V722.9h2.22V784.7h2.22V761.4h2.22V712.5h2.22V725.3h2.22V787.9h2.22V742.7h2.22V745.8h2.22V784.1h2.22V775.5h2.22V702.8h2.22V778.2h2.22V748.8h2.22V882.9h2.22V787.5h2.22V787.6h2.22V768.8h2.22V785.9h2.22V799.2h2.22V675.4h2.22V738.6h2.22V755.9h2.22V736.1h2.22V776.3h2.22V776.3h2.22V821h2.22V771.6h2.22V737.9h2.22V763.8h2.22V788.8h2.22V788.8h2.22V703.3h2.22V775.4h2.22V775.4h2.22V733.5h2.22V766.5h2.22V765.9h2.22V765.9h2.22V771.2h2.22V778h2.22V726.3h2.22V779.3h2.22V743.4h2.22V737.1h2.22V721.3h2.22V752.1h2.22V753h2.22V766.9h2.22V788.4h2.22V787h2.22V787h2.22V718.9h2.22V721.9h2.22V771.6h2.22V762.1h2.22V737.6h2.22V722.6h2.22V745h2.22V778h2.22V723.9h2.22V797.5h2.22V809h2.22V746.7h2.22V709.8h2.22V755.8h2.22V808h2.22V743.8h2.22V743.8h2.22V786h2.22V746.8h2.22V777.1h2.22V797.5h2.22V747.2h2.22V746.4h2.22V746.3h2.22V774h2.22V733.7h2.22V768.8h2.22V801h2.22V728.3h2.22V759.5h2.22V755.7h2.22V764.9h2.22V737.4h2.22V737.4h2.22V751.8h2.22V687.2h2.22V687.2h2.22V797.5h2.22V724.8h2.22V765.5h2.22V765.6h2.22V747.6h2.22V756.6h2.22V744.7h2.22V756.7h2.22V752.3h2.22V739.2h2.22V756.6h2.22V757.5h2.22V790.6h2.22V756.4h2.22V797.5h2.22V782.2h2.22V782.2h2.22V745.9h2.22V761.6h2.22V754.9h2.22V725h2.22V761.5h2.22V744.5h2.22V744.5h2.22V812.6h2.22V789.6h2.22V736.4h2.22V777.4h2.22V730.8h2.22V780.3h2.22V749.2h2.22V749.2h2.22V836.7h2.22V756.6h2.22V749.7h2.22V762.9h2.22V772.5h2.22V795h2.22V745.4h2.22V797.5h2.22V769h2.22V751.3h2.22V782.6h2.22V782.6h2.22V755.2h2.22V807.3h2.22V796.5h2.22V744.3h2.22V793.8h2.22V765.1h2.22V798.9h2.22V751.3h2.22V745h2.22V769.4h2.22V731.1h2.22V731.1h2.22V685.7h2.22V685.7h2.22V797.5h2.22V767.4h2.22V776.2h2.22V752.1h2.22V757h2.22V757h2.22V783.5h2.22V780.3h2.22" stroke="#33209b"/>
<path d="M198,724V734.5h2.22V710.5h2.22V726h2.22V702.1h2.22V732.9h2.22V732.6h2.22V742.4h2.22V727.8h2.22V696.3h2.22V730.2h2.22V707.5h2.22V701.8h2.22V753.8h2.22V718.1h2.22V707.3h2.22V683.7h2.22V718.8h2.22V734.1h2.22V736.2h2.22V736h2.22V689.4h2.22V707.7h2.22V725.1h2.22V724.8h2.22V706.3h2.22V714h2.22V695.9h2.22V681.2h2.22V684.1h2.22V670.4h2.22V735.8h2.22V710.9h2.22V691.3h2.22V727.8h2.22V683.9h2.22V688.1h2.22V684.5h2.22V703.6h2.22V717.2h2.22V714.1h2.22V742.6h2.22V721.9h2.22V708.2h2.22V685.3h2.22V728.2h2.22V706h2.22V709.2h2.22V709.2h2.22V736.2h2.22V718.9h2.22V718.9h2.22V711h2.22V711h2.22V724.2h2.22V692.5h2.22V698.1h2.22V709.2h2.22V723.7h2.22V726.5h2.22V710.5h2.22V688.8h2.22V692.1h2.22V716h2.22V680.4h2.22V723.5h2.22V733.9h2.22V724.7h2.22V710h2.22V706.4h2.22V706.7h2.22V696h2.22V720h2.22V749.2h2.22V718.3h2.22V773h2.22V706.5h2.22V714.6h2.22V714.9h2.22V733.7h2.22V725.8h2.22V726h2.22V696.5h2.22V721.2h2.22V721.4h2.22V723.4h2.22V736.7h2.22V707.9h2.22V749.4h2.22V710.9h2.22V708.4h2.22V708.7h2.22V731.5h2.22V731.7h2.22V752.3h2.22V722.3h2.22V716.8h2.22V697.4h2.22V722.1h2.22V720.5h2.22V734.8h2.22V698.1h2.22V734.7h2.22V734.7h2.22V712.9h2.22V691.5h2.22V709.8h2.22V709.8h2.22V699.9h2.22V725.4h2.22V725.4h2.22V682.2h2.22V738.8h2.22V700.7h2.22V690.5h2.22V743.2h2.22V737.6h2.22V712.9h2.22V708.8h2.22V773h2.22V710.7h2.22V742.8h2.22V741.2h2.22V713.7h2.22V689.2h2.22V744.4h2.22V697.7h2.22V732.7h2.22V740.3h2.22V723.5h2.22V742.2h2.22V742.2h2.22V713.9h2.22V724.7h2.22V733.9h2.22V733.9h2.22V720.7h2.22V772h2.22V707.8h2.22V740.6h2.22V731.6h2.22V725.4h2.22V720.2h2.22V688.3h2.22V711.9h2.22V711.9h2.22V713.5h2.22V698.3h2.22V698.9h2.22V733h2.22V686.6h2.22V686.6h2.22V724.1h2.22V738.2h2.22V721.6h2.22V719.3h2.22V722.5h2.22V746.9h2.22V725.1h2.22V734.7h2.22V725.2h2.22V714.2h2.22V728h2.22V728h2.22V749h2.22V713h2.22V722.7h2.22V718.1h2.22V736.5h2.22V690.5h2.22V690.5h2.22V756h2.22V723.2h2.22V701.5h2.22V741.9h2.22V758.9h2.22V745.3h2.22V745.3h2.22V735.8h2.22V719.2h2.22V729.9h2.22V741.6h2.22V731.6h2.22V722h2.22V736.8h2.22V707.7h2.22V741.4h2.22V731h2.22V731h2.22V731h2.22V684.7h2.22V683.4h2.22V687.7h2.22V737.2h2.22V684.4h2.22V727.5h2.22V728.5h2.22V728h2.22V728h2.22V711.2h2.22V721.3h2.22V708.8h2.22V754.7h2.22V719.9h2.22V719.2h2.22V746.9h2.22V746.9h2.22V720.3h2.22V720.3h2.22V690.6h2.22V690.6h2.22V729.9h2.22V723.7h2.22V765.4h2.22V729h2.22V711.5h2.22V716.4h2.22V757.3h2.22V757.3h2.22V761.1h2.22V717.7h2.22V714.7h2.22V714.7h2.22V723.3h2.22V687.9h2.22V728.3h2.22V722.5h2.22V742.4h2.22V742.4h2.22V735.3h2.22V756.4h2.22V702.5h2.22V700h2.22V687.5h2.22V725.1h2.22V727.9h2.22V709.6h2.22V695.6h2.22V695.4h2.22V679.5h2.22V683.7h2.22V683.6h2.22V717.6h2.22V733.1h2.22V732.9h2.22V678.7h2.22V678.6h2.22V740.6h2.22V755.8h2.22V748.4h2.22V723h2.22V745.9h2.22V716.2h2.22V709.9h2.22V687.1h2.22V722.4h2.22V691.1h2.22V702.9h2.22V746.6h2.22V724.3h2.22V691.7h2.22V718h2.22V721.8h2.22V721.6h2.22V691.5h2.22V683.9h2.22V695.5h2.22V728.1h2.22V727.9h2.22V749.9h2.22V688.6h2.22V720.4h2.22V773h2.22V720.9h2.22V684.9h2.22V707.1h2.22V706.1h2.22V741.3h2.22V714h2.22V739h2.22V721.7h2.22V690h2.22V703.5h2.22V706.6h2.22V706.4h2.22V751.4h2.22V721.6h2.22V693.7h2.22V693.5h2.22V741.4h2.22V708.9h2.22V713.6h2.22V698.4h2.22V773h2.22V739.5h2.22V722.5h2.22V722.9h2.22V726.9h2.22V680.9h2.22V686.9h2.22V714.1h2.22V733.1h2.22V742h2.22V689.5h2.22V692h2.22V694.4h2.22V694.4h2.22V683.8h2.22V698.9h2.22V712.9h2.22V679h2.22V688.1h2.22V680.3h2.22V680.3h2.22V699.5h2.22V685.4h2.22V727.9h2.22V712.8h2.22V716.3h2.22V704.1h2.22V696.2h2.22V714.7h2.22V731.5h2.22V729.5h2.22V720.3h2.22V748h2.22V748h2.22V725.5h2.22V710.4h2.22V687.4h2.22V694.3h2.22V732.1h2.22V692h2.22V686.5h2.22V673.8h2.22V713.8h2.22V713.8h2.22V736.8h2.22V682.1h2.22V693h2.22V693h2.22V728.3h2.22V722h2.22V703.1h2.22V685.1h2.22V685.1h2.22V733.4h2.22V733.4h2.22V715.3h2.22V703.3h2.22V703.3h2.22V722.4h2.22V693.7h2.22V698.7h2.22V711.4h2.22V734.6h2.22V694.6h2.22V705.2h2.22V684.7h2.22V733.3h2.22V708.1h2.22" stroke="#9a2a9b"/>
<path d="M198,699.5V706.5h2.22V688h2.22V666h2.22V680.5h2.22V694.2h2.22V661h2.22V661h2.22V695.5h2.22V692.9h2.22V672.9h2.22V680.6h2.22V712.8h2.22V691.6h2.22V675h2.22V676.4h2.22V676.5h2.22V679.3h2.22V689.9h2.22V673.1h2.22V661h2.22V661h2.22V680.5h2.22V711.3h2.22V686h2.22V715.5h2.22V727h2.22V732.1h2.22V732.3h2.22V751.2h2.22V679.3h2.22V702.4h2.22V702.6h2.22V667.5h2.22V703.5h2.22V689.4h2.22V714.4h2.22V723.5h2.22V690.2h2.22V708.3h2.22V686.7h2.22V726.3h2.22V703.7h2.22V707.6h2.22V707h2.22V687.1h2.22V691.3h2.22V696.8h2.22V716.2h2.22V688.4h2.22V701.5h2.22V748.6h2.22V695h2.22V737.5h2.22V717.7h2.22V708.8h2.22V670.8h2.22V661h2.22V698.8h2.22V721.2h2.22V691.7h2.22V752h2.22V696.5h2.22V702.6h2.22V713.7h2.22V713.5h2.22V728.1h2.22V704h2.22V703.7h2.22V712.4h2.22V721.1h2.22V685.8h2.22V677.4h2.22V691.1h2.22V684.5h2.22V699.1h2.22V713.2h2.22V697.2h2.22V679h2.22V723.5h2.22V702.8h2.22V693.4h2.22V693.1h2.22V752h2.22V714.1h2.22V736.3h2.22V736.1h2.22V670.6h2.22V712.3h2.22V696.7h2.22V739.2h2.22V703.8h2.22V706.4h2.22V707.5h2.22V701.7h2.22V705h2.22V706.8h2.22V718h2.22V689.7h2.22V689.5h2.22V752h2.22V728.8h2.22V677.2h2.22V700.5h2.22V669.6h2.22V691h2.22V716.2h2.22V680.8h2.22V709.8h2.22V680h2.22V681.4h2.22V681.4h2.22V723.2h2.22V689.4h2.22V718.9h2.22V699.8h2.22V684.8h2.22V661h2.22V691h2.22V752h2.22V710.7h2.22V691.3h2.22V691.3h2.22V688.9h2.22V683.3h2.22V691.1h2.22V686.6h2.22V672.1h2.22V705.3h2.22V704.1h2.22V699.1h2.22V712.6h2.22V694h2.22V718.3h2.22V714.6h2.22V716.4h2.22V687.7h2.22V715.4h2.22V689.6h2.22V665.6h2.22V661h2.22V689.3h2.22V710.5h2.22V702.9h2.22V727.3h2.22V683.7h2.22V702.5h2.22V678.3h2.22V678.3h2.22V690.1h2.22V681.9h2.22V707h2.22V701.4h2.22V736.4h2.22V694.1h2.22V694.1h2.22V718h2.22V695.9h2.22V705.6h2.22V695.8h2.22V700h2.22V686.1h2.22V687.9h2.22V695.6h2.22V721.5h2.22V672.3h2.22V727.2h2.22V694.7h2.22V683.6h2.22V682h2.22V714h2.22V699.1h2.22V688.7h2.22V715.2h2.22V711.3h2.22V708.3h2.22V708.3h2.22V715.8h2.22V726.1h2.22V701.7h2.22V716.8h2.22V715h2.22V715.7h2.22V696.4h2.22V685.3h2.22V687.2h2.22V675.2h2.22V691.6h2.22V718.8h2.22V669.3h2.22V690.6h2.22V727.9h2.22V707.7h2.22V687.9h2.22V686.6h2.22V715.8h2.22V737.6h2.22V707.9h2.22V679.7h2.22V687.8h2.22V740.1h2.22V740.1h2.22V715.9h2.22V715.8h2.22V713.7h2.22V713.6h2.22V715.2h2.22V715.2h2.22V741.6h2.22V728.9h2.22V707.3h2.22V700.9h2.22V677.6h2.22V677.6h2.22V713.2h2.22V691.5h2.22V724.5h2.22V680.5h2.22V693.1h2.22V690h2.22V689.9h2.22V675.2h2.22V752h2.22V669.7h2.22V713.4h2.22V699h2.22V699h2.22V668.9h2.22V694.7h2.22V685.1h2.22V709h2.22V687.1h2.22V670.8h2.22V708.9h2.22V725.3h2.22V725.3h2.22V718.8h2.22V703.3h2.22V707.9h2.22V707.9h2.22V683.5h2.22V688.6h2.22V707.4h2.22V719.4h2.22V719.4h2.22V679.7h2.22V688.5h2.22V690.1h2.22V684.5h2.22V687.6h2.22V675.6h2.22V681.4h2.22V685.7h2.22V684.7h2.22V700.4h2.22V706.8h2.22V705.6h2.22V704.7h2.22V709.1h2.22V705.1h2.22V677.2h2.22V687.8h2.22V687.8h2.22V709.1h2.22V710.9h2.22V693h2.22V708h2.22V705.7h2.22V705.7h2.22V699.4h2.22V722.9h2.22V702.4h2.22V734.6h2.22V734.5h2.22V676.7h2.22V676.7h2.22V701.3h2.22V698.6h2.22V700h2.22V734.4h2.22V688h2.22V698.4h2.22V703.7h2.22V674h2.22V678.6h2.22V688.7h2.22V716.5h2.22V673.9h2.22V673.9h2.22V691.8h2.22V706.7h2.22V683.4h2.22V716.4h2.22V739.5h2.22V729.7h2.22V690.5h2.22V687.1h2.22V687.1h2.22V676.6h2.22V661h2.22V687h2.22V675h2.22V692.3h2.22V691.1h2.22V706.6h2.22V716h2.22V687.2h2.22V679.5h2.22V693.6h2.22V714.1h2.22V691.2h2.22V692.2h2.22V691.7h2.22V700.8h2.22V662.2h2.22V662.2h2.22V677.5h2.22V679.7h2.22V679.1h2.22V687.7h2.22V700.6h2.22V684.7h2.22V713.4h2.22V704.2h2.22V668.5h2.22V697.4h2.22V710.4h2.22V697.9h2.22V686.2h2.22V725h2.22V697.1h2.22V683.3h2.22V699.5h2.22V678h2.22V678h2.22V692.2h2.22V694.9h2.22V715.8h2.22V698.6h2.22V689.7h2.22V714.1h2.22V689.9h2.22V744.7h2.22V744.7h2.22V712.4h2.22V701.6h2.22V725.7h2.22V704.9h2.22V686.1h2.22V686.1h2.22V707.8h2.22V707.4h2.22V707.4h2.22V686.6h2.22V737.3h2.22V705.3h2.22V738.2h2.22V689.5h2.22V706.6h2.22V690.6h2.22V720h2.22" stroke="#cbfb31"/>
<path d="M198,706.5V724h2.22V717.7h2.22V704.8h2.22V758.8h2.22V711.9h2.22V712.6h2.22V745h2.22V761.3h2.22V758.9h2.22V764h2.22V719.4h2.22V731.8h2.22V733.6h2.22V734.3h2.22V661h2.22V661h2.22V661h2.22V732.4h2.22V726.3h2.22V740.6h2.22V740.9h2.22V709.4h2.22V692.5h2.22V692.5h2.22V739.3h2.22V753.4h2.22V773.2h2.22V705.2h2.22V722.5h2.22V757.3h2.22V729.9h2.22V727.9h2.22V767.7h2.22V708.5h2.22V708.5h2.22V739.2h2.22V739.2h2.22V708.3h2.22V725.8h2.22V788.8h2.22V692.5h2.22V788.8h2.22V760.1h2.22V758.7h2.22V756.8h2.22V744.9h2.22V749.6h2.22V718.1h2.22V730.1h2.22V754.9h2.22V774.9h2.22V760.3h2.22V773.9h2.22V773.4h2.22V739.3h2.22V698.4h2.22V784.5h2.22V732h2.22V746.9h2.22V746.9h2.22V764.2h2.22V682h2.22V751.7h2.22V763.8h2.22V712.3h2.22V741.7h2.22V762h2.22V712.6h2.22V734.1h2.22V734.1h2.22V768h2.22V755.5h2.22V742.6h2.22V788.4h2.22V788.5h2.22V751.8h2.22V811.5h2.22V754.4h2.22V698.9h2.22V804.5h2.22V737h2.22V751.7h2.22V788.8h2.22V745.6h2.22V745.7h2.22V758.8h2.22V764.9h2.22V764.9h2.22V759h2.22V759.1h2.22V770.5h2.22V721.1h2.22V732h2.22V788.8h2.22V769.4h2.22V762.6h2.22V735.8h2.22V764.9h2.22V742.9h2.22V788.8h2.22V775.8h2.22V757.6h2.22V753.2h2.22V732.8h2.22V752.1h2.22V748.7h2.22V768.4h2.22V753.3h2.22V768.6h2.22V703.8h2.22V763.9h2.22V813.2h2.22V740.4h2.22V805.6h2.22V755.9h2.22V726.3h2.22V756.2h2.22V661h2.22V763h2.22V763h2.22V753.2h2.22V770.3h2.22V765.6h2.22V757.6h2.22V762.6h2.22V756.9h2.22V756h2.22V751.7h2.22V717.1h2.22V705.9h2.22V730.9h2.22V781.2h2.22V752.3h2.22V715.9h2.22V715.9h2.22V697.7h2.22V785h2.22V764.2h2.22V730.5h2.22V739.9h2.22V754.5h2.22V686.8h2.22V758.3h2.22V714.2h2.22V714.2h2.22V756h2.22V757.7h2.22V771.4h2.22V799.6h2.22V737.7h2.22V757.7h2.22V740.3h2.22V725.9h2.22V751.5h2.22V751.5h2.22V750.3h2.22V756.4h2.22V723.5h2.22V773.6h2.22V788.8h2.22V755.8h2.22V752.7h2.22V744.2h2.22V747.7h2.22V743.7h2.22V732.7h2.22V721.8h2.22V761.7h2.22V761.2h2.22V725.4h2.22V712.3h2.22V811.5h2.22V731.8h2.22V755.5h2.22V753.6h2.22V752.4h2.22V751.9h2.22V745.9h2.22V750.4h2.22V740.4h2.22V757.2h2.22V717.7h2.22V751.4h2.22V750.9h2.22V764.2h2.22V710.7h2.22V721.5h2.22V761.5h2.22V707.4h2.22V706.9h2.22V740.9h2.22V719.8h2.22V737h2.22V710.2h2.22V717.1h2.22V729.5h2.22V738.9h2.22V710.8h2.22V710.3h2.22V718.6h2.22V752h2.22V731.7h2.22V734.4h2.22V760.5h2.22V718.5h2.22V704h2.22V710.9h2.22V723.1h2.22V733.9h2.22V704.8h2.22V704.7h2.22V736.9h2.22V709.4h2.22V701.3h2.22V737.8h2.22V783.2h2.22V718.7h2.22V740.5h2.22V740.4h2.22V857.4h2.22V724.9h2.22V728h2.22V702.5h2.22V705.8h2.22V690.1h2.22V661h2.22V697.2h2.22V731.2h2.22V741.3h2.22V725.8h2.22V724.2h2.22V694.2h2.22V725.1h2.22V688.2h2.22V736.2h2.22V672.4h2.22V672.4h2.22V722.3h2.22V766.8h2.22V719.9h2.22V735.1h2.22V735h2.22V785.1h2.22V782.8h2.22V706.8h2.22V751h2.22V751h2.22V691.3h2.22V726.1h2.22V719.2h2.22V719.1h2.22V711.8h2.22V750.1h2.22V732.9h2.22V698h2.22V712.4h2.22V728.3h2.22V743.3h2.22V709h2.22V708.9h2.22V723.7h2.22V775.9h2.22V775.8h2.22V726.9h2.22V715.3h2.22V714.8h2.22V749.9h2.22V697.7h2.22V700h2.22V706h2.22V719.2h2.22V728.9h2.22V705.2h2.22V706.2h2.22V742.9h2.22V755.7h2.22V743.7h2.22V748.8h2.22V735.7h2.22V760h2.22V712.7h2.22V753.8h2.22V718.8h2.22V759.2h2.22V729.8h2.22V755.7h2.22V711.6h2.22V736.1h2.22V759.2h2.22V742.8h2.22V732h2.22V745h2.22V780.7h2.22V741.5h2.22V742.4h2.22V747.9h2.22V746.3h2.22V726.7h2.22V729h2.22V729.9h2.22V760h2.22V757.5h2.22V753.7h2.22V775.7h2.22V720.3h2.22V778.9h2.22V767.4h2.22V747.7h2.22V762.3h2.22V752h2.22V742.5h2.22V736.6h2.22V745.7h2.22V782.4h2.22V734.2h2.22V788.8h2.22V771.1h2.22V746.9h2.22V738.6h2.22V742.7h2.22V797.5h2.22V779.2h2.22V733.9h2.22V759h2.22V788.8h2.22V813.6h2.22V743.2h2.22V788.8h2.22V766.9h2.22V732.2h2.22V785.5h2.22V771.4h2.22V759.5h2.22V733.7h2.22V785.1h2.22V741.4h2.22V745.6h2.22V733h2.22V779h2.22V776.3h2.22V776.3h2.22V773.2h2.22V773.3h2.22V770.5h2.22V751.3h2.22V751.4h2.22V736.5h2.22V752.1h2.22V752.3h2.22V752.4h2.22V756.7h2.22V736.3h2.22V664.5h2.22V759.1h2.22V815h2.22V725h2.22V765.9h2.22V730.1h2.22V730.2h2.22V702.7h2.22" stroke="#fd2b1f"/></g>
<g stroke-width="2" stroke-dasharray="2 2" id="grid"><line x1="190" x2="1000" y1="993" y2="993" stroke="rgba(90,90,90,.24)"/><line x1="190" x2="1000" y1="975" y2="975" stroke="rgba(215,60,60,.33)"/><line x1="190" x2="1000" y1="959" y2="959" stroke="rgba(90,90,90,.24)"/><line x1="190" x2="1000" y1="941" y2="941" stroke="rgba(215,60,60,.33)"/><line x1="190" x2="1000" y1="923" y2="923" stroke="rgba(90,90,90,.24)"/><line x1="190" x2="1000" y1="905" y2="905" stroke="rgba(215,60,60,.33)"/><line x1="190" x2="1000" y1="889" y2="889" stroke="rgba(90,90,90,.24)"/><line x1="190" x2="1000" y1="871" y2="871" stroke="rgba(215,60,60,.33)"/><line x1="190" x2="1000" y1="853" y2="853" stroke="rgba(90,90,90,.24)"/><line x1="190" x2="1000" y1="835" y2="835" stroke="rgba(215,60,60,.33)"/><line x1="190" x2="1000" y1="819" y2="819" stroke="rgba(90,90,90,.24)"/><line x1="190" x2="1000" y1="801" y2="801" stroke="rgba(215,60,60,.33)"/><line x1="190" x2="1000" y1="783" y2="783" stroke="rgba(90,90,90,.24)"/><line x1="190" x2="1000" y1="765" y2="765" stroke="rgba(215,60,60,.33)"/><line x1="190" x2="1000" y1="749" y2="749" stroke="rgba(90,90,90,.24)"/><line x1="190" x2="1000" y1="731" y2="731" stroke="rgba(215,60,60,.33)"/><line x1="190" x2="1000" y1="713" y2="713" stroke="rgba(90,90,90,.24)"/><line x1="190" x2="1000" y1="695" y2="695" stroke="rgba(215,60,60,.33)"/><line x1="190" x2="1000" y1="679" y2="679" stroke="rgba(90,90,90,.24)"/><line x1="190" x2="1000" y1="661" y2="661" stroke="rgba(215,60,60,.33)"/><line x1="221.0" x2="221.0" y1="656" y2="1014" stroke="rgba(90,90,90,.24)"/><line x1="247.0" x2="247.0" y1="656" y2="1014" stroke="rgba(90,90,90,.24)"/><line x1="273.0" x2="273.0" y1="656" y2="1016" stroke="rgba(215,60,60,.33)"/><line x1="301.0" x2="301.0" y1="656" y2="1014" stroke="rgba(90,90,90,.24)"/><line x1="327.0" x2="327.0" y1="656" y2="1014" stroke="rgba(90,90,90,.24)"/><line x1="353.0" x2="353.0" y1="656" y2="1014" stroke="rgba(90,90,90,.24)"/><line x1="381.0" x2="381.0" y1="656" y2="1014" stroke="rgba(90,90,90,.24)"/><line x1="407.0" x2="407.0" y1="656" y2="1014" stroke="rgba(90,90,90,.24)"/><line x1="433.0" x2="433.0" y1="656" y2="1016" stroke="rgba(215,60,60,.33)"/><line x1="461.0" x2="461.0" y1="656" y2="1014" stroke="rgba(90,90,90,.24)"/><line x1="487.0" x2="487.0" y1="656" y2="1014" stroke="rgba(90,90,90,.24)"/><line x1="513.0" x2="513.0" y1="656" y2="1014" stroke="rgba(90,90,90,.24)"/><line x1="541.0" x2="541.0" y1="656" y2="1014" stroke="rgba(90,90,90,.24)"/><line x1="567.0" x2="567.0" y1="656" y2="1014" stroke="rgba(90,90,90,.24)"/><line x1="593.0" x2="593.0" y1="656" y2="1016" stroke="rgba(215,60,60,.33)"/><line x1="621.0" x2="621.0" y1="656" y2="1014" stroke="rgba(90,90,90,.24)"/><line x1="647.0" x2="647.0" y1="656" y2="1014" stroke="rgba(90,90,90,.24)"/><line x1="673.0" x2="673.0" y1="656" y2="1014" stroke="rgba(90,90,90,.24)"/><line x1="701.0" x2="701.0" y1="656" y2="1014" stroke="rgba(90,90,90,.24)"/><line x1="727.0" x2="727.0" y1="656" y2="1014" stroke="rgba(90,90,90,.24)"/><line x1="753.0" x2="753.0" y1="656" y2="1016" stroke="rgba(215,60,60,.33)"/><line x1="781.0" x2="781.0" y1="656" y2="1014" stroke="rgba(90,90,90,.24)"/><line x1="807.0" x2="807.0" y1="656" y2="1014" stroke="rgba(90,90,90,.24)"/><line x1="833.0" x2="833.0" y1="656" y2="1014" stroke="rgba(90,90,90,.24)"/><line x1="861.0" x2="861.0" y1="656" y2="1014" stroke="rgba(90,90,90,.24)"/><line x1="887.0" x2="887.0" y1="656" y2="1014" stroke="rgba(90,90,90,.24)"/><line x1="913.0" x2="913.0" y1="656" y2="1016" stroke="rgba(215,60,60,.33)"/><line x1="941.0" x2="941.0" y1="656" y2="1014" stroke="rgba(90,90,90,.24)"/><line x1="967.0" x2="967.0" y1="656" y2="1014" stroke="rgba(90,90,90,.24)"/><line x1="993.0" x2="993.0" y1="656" y2="1014" stroke="rgba(90,90,90,.24)"/></g>
<rect x="194" y="655" width="2" height="363" fill="#5a5a5a"/>
<rect x="188" y="1010" width="814" height="2" fill="#5a5a5a"/>
<line x1="190" x2="1000" y1="1011" y2="1011" stroke="#a05050" stroke-width="2" stroke-dasharray="2 2" opacity=".6"/>
<path d="M195,646.5 L201,656 L189,656 Z" fill="#7e1f22"/>
<path d="M1010,1010 L1000,1004.3 L1000,1015.7 Z" fill="#7e1f22"/>
</svg>
<div class="gl" style="left:160.4px;width:800px;text-align:center;top:608.9px;font-size:25.5px;letter-spacing:1.6px;color:#000;">10) Memcached hit percentages - by day</div>
<div class="gl" style="right:1046.5px;text-align:right;top:998.7px;font-size:19.5px;letter-spacing:1px;color:#000;">0</div>
<div class="gl" style="right:1046.5px;text-align:right;top:964.7px;font-size:19.5px;letter-spacing:1px;color:#000;">10</div>
<div class="gl" style="right:1046.5px;text-align:right;top:928.7px;font-size:19.5px;letter-spacing:1px;color:#000;">20</div>
<div class="gl" style="right:1046.5px;text-align:right;top:894.7px;font-size:19.5px;letter-spacing:1px;color:#000;">30</div>
<div class="gl" style="right:1046.5px;text-align:right;top:858.7px;font-size:19.5px;letter-spacing:1px;color:#000;">40</div>
<div class="gl" style="right:1046.5px;text-align:right;top:824.7px;font-size:19.5px;letter-spacing:1px;color:#000;">50</div>
<div class="gl" style="right:1046.5px;text-align:right;top:788.7px;font-size:19.5px;letter-spacing:1px;color:#000;">60</div>
<div class="gl" style="right:1046.5px;text-align:right;top:754.7px;font-size:19.5px;letter-spacing:1px;color:#000;">70</div>
<div class="gl" style="right:1046.5px;text-align:right;top:718.7px;font-size:19.5px;letter-spacing:1px;color:#000;">80</div>
<div class="gl" style="right:1046.5px;text-align:right;top:684.7px;font-size:19.5px;letter-spacing:1px;color:#000;">90</div>
<div class="gl" style="right:1046.5px;text-align:right;top:648.7px;font-size:19.5px;letter-spacing:1px;color:#000;">100</div>
<div class="gl" style="left:-123.9px;width:800px;text-align:center;top:1016.7px;font-size:19.5px;letter-spacing:1.25px;color:#000;">Sat 12:00</div>
<div class="gl" style="left:196.1px;width:800px;text-align:center;top:1016.7px;font-size:19.5px;letter-spacing:1.25px;color:#000;">Sun 00:00</div>
<div class="gl" style="left:516.1px;width:800px;text-align:center;top:1016.7px;font-size:19.5px;letter-spacing:1.25px;color:#000;">Sun 12:00</div>
<div class="gl" style="left:62px;top:823px;width:40px;text-align:center;font-size:22.5px;transform:rotate(-90deg);">%</div>
<div class="gl" style="left:1036.6px;top:604.5px;font-size:16px;letter-spacing:.14px;color:#a9a9a9;transform-origin:0 0;transform:rotate(90deg) translate(0,-50%);line-height:16px;height:16px;">RRDTOOL / TOBI OETIKER</div>
<div class="gl" style="left:511.0px;top:1287.6px;font-size:15px;letter-spacing:1.6px;color:#b1b1b1;">Munin 1.4.6</div>
<div class="m" style="left:378.5px;top:1047.3px;">Cur:</div><div class="m" style="left:571.1px;top:1047.3px;">Min:</div><div class="m" style="left:763.8px;top:1047.3px;">Avg:</div><div class="m" style="left:956.4px;top:1047.3px;">Max:</div>
<div class="sw" style="top:1076.6px;background:#21c427;"></div>
<div class="m" style="left:113.6px;top:1071.3px;">hit-% 11211</div><div class="m" style="left:390.5px;top:1071.3px;">84.06</div><div class="m" style="left:583.2px;top:1071.3px;">38.81</div><div class="m" style="left:775.8px;top:1071.3px;">76.67</div><div class="m" style="left:968.4px;top:1071.3px;">99.65</div>
<div class="sw" style="top:1100.6px;background:#0e6db6;"></div>
<div class="m" style="left:113.6px;top:1095.3px;">hit-% 11212</div><div class="m" style="left:390.5px;top:1095.3px;">81.10</div><div class="m" style="left:583.2px;top:1095.3px;">42.24</div><div class="m" style="left:775.8px;top:1095.3px;">82.28</div><div class="m" style="left:968.4px;top:1095.3px;">99.98</div>
<div class="sw" style="top:1124.6px;background:#ff8122;"></div>
<div class="m" style="left:113.6px;top:1119.3px;">hit-% 11213</div><div class="m" style="left:390.5px;top:1119.3px;">95.82</div><div class="m" style="left:583.2px;top:1119.3px;">55.14</div><div class="m" style="left:775.8px;top:1119.3px;">90.71</div><div class="m" style="left:956.4px;top:1119.3px;">100.00</div>
<div class="sw" style="top:1148.6px;background:#ffcc2f;"></div>
<div class="m" style="left:113.6px;top:1143.3px;">hit-% 11214</div><div class="m" style="left:390.5px;top:1143.3px;">93.57</div><div class="m" style="left:583.2px;top:1143.3px;">44.58</div><div class="m" style="left:775.8px;top:1143.3px;">86.19</div><div class="m" style="left:968.4px;top:1143.3px;">99.99</div>
<div class="sw" style="top:1172.6px;background:#33209b;"></div>
<div class="m" style="left:113.6px;top:1167.3px;">hit-% 11215</div><div class="m" style="left:390.5px;top:1167.3px;">65.92</div><div class="m" style="left:583.2px;top:1167.3px;">37.15</div><div class="m" style="left:775.8px;top:1167.3px;">76.59</div><div class="m" style="left:968.4px;top:1167.3px;">99.55</div>
<div class="sw" style="top:1196.6px;background:#9a2a9b;"></div>
<div class="m" style="left:113.6px;top:1191.3px;">hit-% 11216</div><div class="m" style="left:390.5px;top:1191.3px;">86.53</div><div class="m" style="left:583.2px;top:1191.3px;">48.48</div><div class="m" style="left:775.8px;top:1191.3px;">84.24</div><div class="m" style="left:968.4px;top:1191.3px;">99.94</div>
<div class="sw" style="top:1220.6px;background:#cbfb31;"></div>
<div class="m" style="left:113.6px;top:1215.3px;">hit-% 11217</div><div class="m" style="left:390.5px;top:1215.3px;">83.14</div><div class="m" style="left:583.2px;top:1215.3px;">49.48</div><div class="m" style="left:775.8px;top:1215.3px;">89.04</div><div class="m" style="left:956.4px;top:1215.3px;">100.00</div>
<div class="sw" style="top:1244.6px;background:#fd2b1f;"></div>
<div class="m" style="left:113.6px;top:1239.3px;">hit-% 11218</div><div class="m" style="left:390.5px;top:1239.3px;">88.09</div><div class="m" style="left:583.2px;top:1239.3px;">44.71</div><div class="m" style="left:775.8px;top:1239.3px;">78.78</div><div class="m" style="left:968.4px;top:1239.3px;">99.90</div>
<div class="m" style="left:583.2px;top:1263.3px;">Last update: Sun Jul  6 15:00:07 2014</div>
</body>
</html>
